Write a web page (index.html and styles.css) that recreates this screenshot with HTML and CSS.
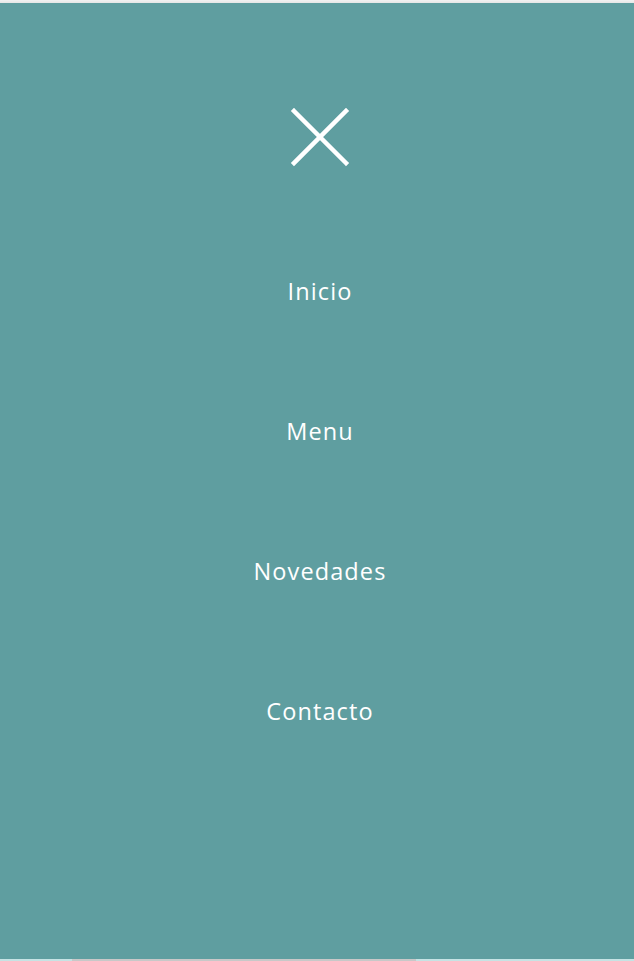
FILE: index.html
```html
<!DOCTYPE html>
<html lang="es">
<head>
<meta charset="utf-8">
<title>Menu</title>
<link rel="stylesheet" href="styles.css">
</head>
<body>
<div class="topbar"></div>
<nav class="overlay">
  <button class="close" aria-label="Cerrar">
    <svg width="60" height="60" viewBox="0 0 60 60">
      <path d="M4 4 L56 56 M56 4 L4 56" stroke="#fff" stroke-width="4.5" stroke-linecap="square" fill="none"/>
    </svg>
  </button>
  <ul class="links">
    <li><a href="#">Inicio</a></li>
    <li><a href="#">Menu</a></li>
    <li><a href="#">Novedades</a></li>
    <li><a href="#">Contacto</a></li>
  </ul>
</nav>
<div class="bottombar"><span class="seg-a"></span><span class="seg-b"></span><span class="seg-c"></span></div>
</body>
</html>
```
FILE: styles.css
```css
html, body {
  margin: 0;
  padding: 0;
  height: 961px;
  overflow: hidden;
  background: #5f9ea0;
}
body {
  display: flex;
  flex-direction: column;
  font-family: "Open Sans", "Noto Sans", sans-serif;
}
.topbar {
  height: 3px;
  background: linear-gradient(#f2f2f2, #e6e6e6);
  flex: none;
}
.overlay {
  flex: 1;
  background: #5f9ea0;
  display: flex;
  flex-direction: column;
  align-items: center;
  padding-left: 6px;
}
.close {
  background: none;
  border: 0;
  padding: 0;
  margin-top: 104px;
  width: 60px;
  height: 60px;
  cursor: pointer;
}
.close svg { display: block; }
.links {
  list-style: none;
  margin: 108px 0 0;
  padding: 0;
  display: flex;
  flex-direction: column;
  align-items: center;
  gap: 108px;
}
.links li {
  height: 32px;
  line-height: 32px;
}
.links a {
  color: #fff;
  text-decoration: none;
  font-size: 23.5px;
  letter-spacing: 1.1px;
}
.bottombar {
  height: 2px;
  display: flex;
  flex: none;
}
.seg-a { width: 72px; background: #c6e3e4; }
.seg-b { width: 344px; background: #c8c8c8; }
.seg-c { flex: 1; background: #c6e3e4; }
```
